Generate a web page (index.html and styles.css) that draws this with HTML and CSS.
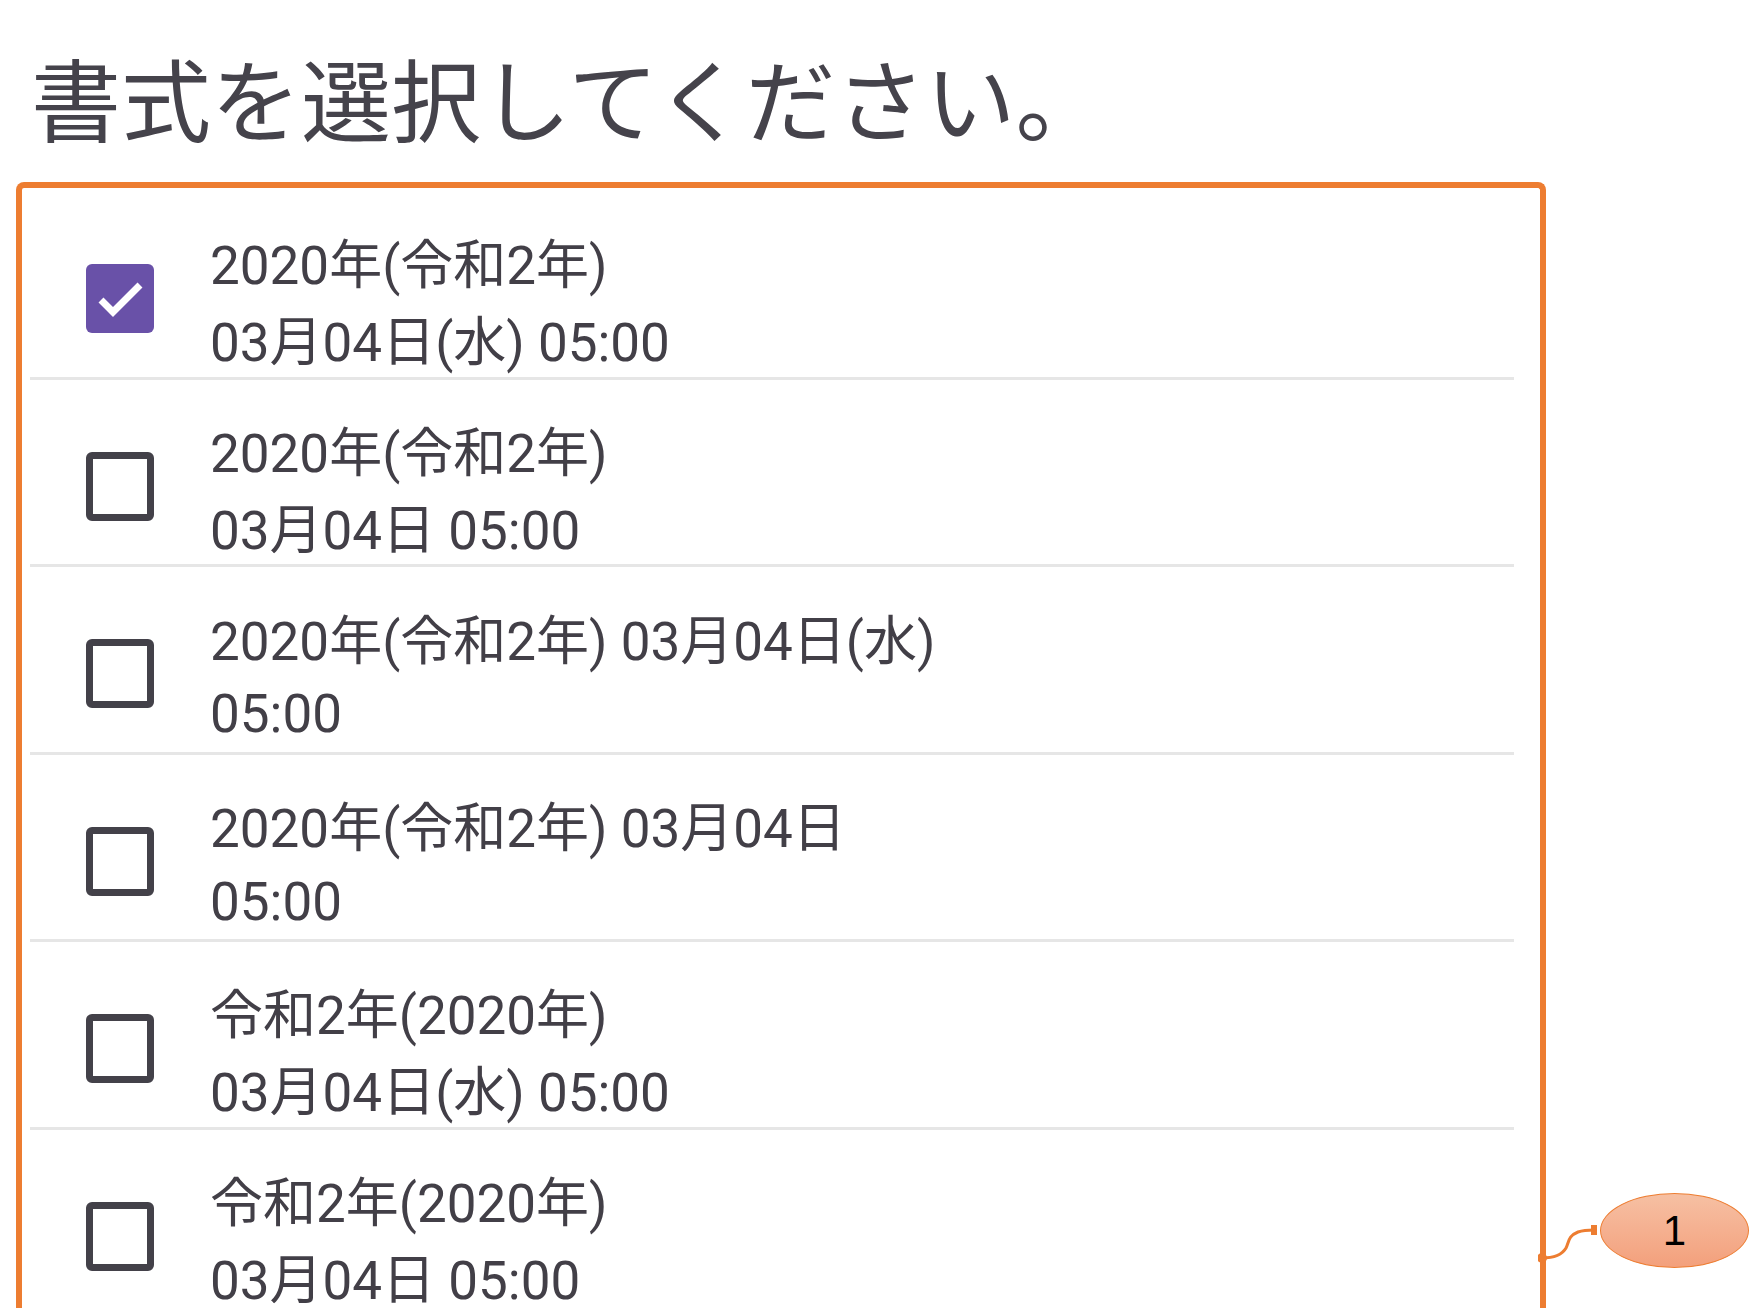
FILE: index.html
```html
<!DOCTYPE html>
<html lang="ja">
<head>
<meta charset="utf-8">
<title>書式を選択してください。</title>
<link rel="stylesheet" href="styles.css">
</head>
<body>
<div class="page">
  <h1 class="title">書式を選択してください。</h1>
  <div class="panel">
    <ul class="options">
      <li class="option">
        <span class="box checked">
          <svg viewBox="0 0 68 69" width="68" height="69"><polyline points="15,36 27,48 54,21" fill="none" stroke="#fff" stroke-width="7"/></svg>
        </span>
        <span class="label">2020年(令和2年)<br>03月04日(水) 05:00</span>
      </li>
      <li class="option">
        <span class="box"></span>
        <span class="label">2020年(令和2年)<br>03月04日 05:00</span>
      </li>
      <li class="option long">
        <span class="box"></span>
        <span class="label">2020年(令和2年) 03月04日(水)<br>05:00</span>
      </li>
      <li class="option long">
        <span class="box"></span>
        <span class="label">2020年(令和2年) 03月04日<br>05:00</span>
      </li>
      <li class="option">
        <span class="box"></span>
        <span class="label">令和2年(2020年)<br>03月04日(水) 05:00</span>
      </li>
      <li class="option">
        <span class="box"></span>
        <span class="label">令和2年(2020年)<br>03月04日 05:00</span>
      </li>
    </ul>
  </div>
  <div class="callout">
    <svg class="callout-line" width="70" height="50" viewBox="0 0 70 50">
      <path d="M4 40 C 14 40, 24 37, 28 30 C 31 24, 30 18, 40 14 C 46 12, 50 12, 56 12" fill="none" stroke="#ed7d31" stroke-width="3"/>
      <circle cx="4" cy="40" r="5" fill="#ed7d31"/>
      <rect x="53" y="7" width="6" height="10" fill="#ed7d31"/>
    </svg>
    <div class="bubble">1</div>
  </div>
</div>
</body>
</html>
```
FILE: styles.css
```css
html, body {
  margin: 0;
  padding: 0;
  background: #ffffff;
  overflow: hidden;
}

.page {
  position: relative;
  padding: 51px 0 0 16px;
  height: 1308px;
  box-sizing: border-box;
}

.title {
  margin: 0 0 41px 15px;
  font-family: "Noto Sans CJK JP", sans-serif;
  font-weight: 400;
  font-size: 90px;
  line-height: 90px;
  color: #45434b;
  letter-spacing: 0;
}

.panel {
  width: 1530px;
  box-sizing: border-box;
  border: 6px solid #ed7d31;
  border-bottom: none;
  border-radius: 8px 8px 0 0;
  padding: 4px 26px 0 8px;
  height: 1200px;
}

.options {
  list-style: none;
  margin: 0;
  padding: 0;
}

.option {
  display: flex;
  align-items: flex-start;
  height: 187.5px;
  box-sizing: border-box;
  padding: 0 0 0 56px;
  border-bottom: 3px solid #e6e6e6;
}

.box {
  flex: none;
  width: 68px;
  height: 69px;
  box-sizing: border-box;
  border: 7px solid #434149;
  border-radius: 6px;
  margin: 72px 56px 0 0;
}

.box.checked {
  border: none;
  background: #6951a8;
  border-radius: 6px;
}

.box.checked svg {
  display: block;
}

.label {
  margin-top: 36px;
  font-family: Roboto, "Noto Sans CJK JP", sans-serif;
  font-size: 53px;
  line-height: 77px;
  color: #423f47;
  white-space: nowrap;
}

.option.long .label {
  margin-top: 38.5px;
  line-height: 72.5px;
}

.callout {
  position: absolute;
  left: 1538px;
  top: 1193px;
  display: flex;
  align-items: flex-start;
}

.callout-line {
  display: block;
  margin-top: 25px;
  margin-right: -8px;
}

.bubble {
  width: 149px;
  height: 75px;
  box-sizing: border-box;
  border: 1px solid #ed7d31;
  border-radius: 50%;
  background: linear-gradient(180deg, #f6c0a3 0%, #f5b090 50%, #f3a07c 100%);
  display: flex;
  align-items: center;
  justify-content: center;
  font-family: "Liberation Sans", Arial, sans-serif;
  font-size: 42px;
  color: #000;
}
```
